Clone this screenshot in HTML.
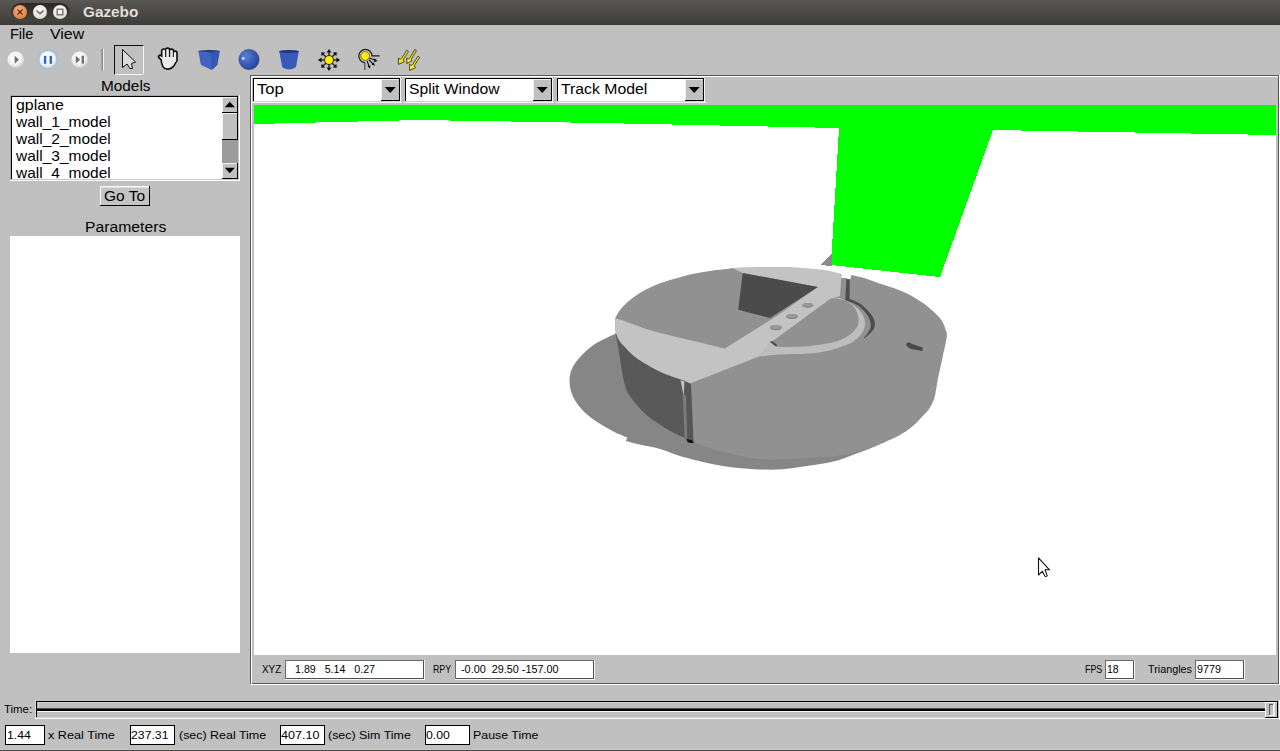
<!DOCTYPE html>
<html><head><meta charset="utf-8"><title>Gazebo</title>
<style>
html,body{margin:0;padding:0;}
body{width:1280px;height:751px;overflow:hidden;position:relative;background:#c0c0c0;font-family:"Liberation Sans",sans-serif;}
.t{position:absolute;white-space:pre;line-height:1;transform-origin:0 0;}
.b{position:absolute;box-sizing:border-box;}
svg{position:absolute;}
</style></head><body>

<div class="b" style="left:0px;top:0px;width:1280px;height:25px;background:linear-gradient(#595854,#3c3b37);"></div>
<svg style="left:0;top:0" width="80" height="25" viewBox="0 0 80 25">
<defs>
<radialGradient id="gc" cx="0.45" cy="0.35" r="0.7"><stop offset="0" stop-color="#f5b382"/><stop offset="1" stop-color="#e0793c"/></radialGradient>
<radialGradient id="gw" cx="0.45" cy="0.35" r="0.7"><stop offset="0" stop-color="#ffffff"/><stop offset="1" stop-color="#dcd9cf"/></radialGradient>
<linearGradient id="gp" x1="0" y1="0" x2="0" y2="1"><stop offset="0" stop-color="#2a2926"/><stop offset="1" stop-color="#46443f"/></linearGradient>
</defs>
<rect x="11" y="3" width="59" height="18" rx="9" fill="url(#gp)"/>
<circle cx="20" cy="12" r="7" fill="url(#gc)"/>
<path d="M17.5 9.5 L22.5 14.5 M22.5 9.5 L17.5 14.5" stroke="#5a2a12" stroke-width="1.3"/>
<circle cx="40" cy="12" r="7" fill="url(#gw)"/>
<path d="M36.6 10.6 L40 13.8 L43.4 10.6" stroke="#6a6862" stroke-width="1.5" fill="none"/>
<circle cx="60" cy="12" r="7" fill="url(#gw)"/>
<rect x="57.2" y="9.2" width="5.6" height="5.6" stroke="#6a6862" stroke-width="1.3" fill="none"/>
</svg>
<div class="t" style="left:82.50px;top:5px;font-size:14px;color:#e2ded6;font-weight:bold;transform:scaleX(1.0942);">Gazebo</div>
<div class="t" style="left:10.00px;top:27px;font-size:14px;color:#000;transform:scaleX(1.0337);">File</div>
<div class="t" style="left:50.00px;top:27px;font-size:14px;color:#000;transform:scaleX(1.1362);">View</div>
<svg style="left:0;top:40px" width="440" height="36" viewBox="0 40 440 36">
<defs>
<radialGradient id="btn" cx="0.45" cy="0.4" r="0.6"><stop offset="0" stop-color="#ffffff"/><stop offset="0.7" stop-color="#f2f2f2"/><stop offset="1" stop-color="#cfcfcf"/></radialGradient>
<radialGradient id="blu" cx="0.35" cy="0.35" r="0.75"><stop offset="0" stop-color="#5b7fd6"/><stop offset="0.6" stop-color="#3658b4"/><stop offset="1" stop-color="#223f96"/></radialGradient>
</defs>
<circle cx="15.7" cy="59.7" r="8.6" fill="#d6d6d6" opacity="0.6"/>
<circle cx="15.7" cy="59.6" r="8" fill="url(#btn)"/>
<path d="M14.6 55.6 L18.9 59.7 L14.6 63.8 Z" fill="#707070"/>
<circle cx="48" cy="59.7" r="10.4" fill="#9fc0e6"/>
<circle cx="48" cy="59.7" r="8.6" fill="url(#btn)"/>
<rect x="43.9" y="55.9" width="2.4" height="7.9" fill="#2f66cc"/>
<rect x="49.6" y="55.9" width="2.4" height="7.9" fill="#2f66cc"/>
<circle cx="79.6" cy="59.7" r="8.6" fill="#d6d6d6" opacity="0.6"/>
<circle cx="79.6" cy="59.6" r="8" fill="url(#btn)"/>
<path d="M75.8 55.8 L80.2 59.7 L75.8 63.6 Z" fill="#707070"/>
<rect x="81.6" y="55.8" width="2.4" height="7.8" fill="#707070"/>
<rect x="101.5" y="49" width="1.5" height="21.5" fill="#8a8a8a"/>
<rect x="103" y="49" width="1" height="21.5" fill="#f0f0f0"/>
<rect x="114.5" y="45.5" width="29" height="29" fill="none" stroke="#111" stroke-width="1"/>
<path d="M143.5 45.5 V74.5 H114.5" fill="none" stroke="#f4f4f4" stroke-width="1"/>
<path d="M122.5 49.5 L122.5 67.5 L127 64 L130 68.5 L132.5 68.5 L131.5 63.5 L135.5 62 Z" fill="#dcdcdc" stroke="#111" stroke-width="1" stroke-linejoin="round"/>
<g stroke="#111" stroke-width="2.3" fill="#111" stroke-linejoin="round" stroke-linecap="round">
<rect x="162" y="49.3" width="3.6" height="12" rx="1.8"/>
<rect x="165.8" y="48.4" width="3.6" height="12" rx="1.8"/>
<rect x="169.7" y="49.4" width="3.6" height="12" rx="1.8"/>
<rect x="173.3" y="51.4" width="3.4" height="10" rx="1.7"/>
<path d="M163.5 61.5 L159.2 57.6 C158 56.5 159.8 54.8 161.2 55.8 L164 58"/>
<path d="M161.5 58 C161.5 63 162.5 68.8 167.5 68.8 C172 68.8 176.2 64 176.2 58 L176 56 L162 56 Z"/>
</g>
<g fill="#ececec">
<rect x="162.5" y="49.8" width="2.6" height="12" rx="1.3"/>
<rect x="166.3" y="48.9" width="2.6" height="12" rx="1.3"/>
<rect x="170.2" y="49.9" width="2.6" height="12" rx="1.3"/>
<rect x="173.8" y="51.9" width="2.4" height="10" rx="1.2"/>
<path d="M163.5 61 L159.6 57.3 C158.9 56.7 160.1 55.8 160.9 56.4 L164.5 59.5 Z"/>
<path d="M162 58.5 C162 63 163 68.3 167.5 68.3 C171.7 68.3 175.7 63.8 175.7 58.5 L175.7 57 L162.5 57 Z"/>
</g>
<path d="M198.8 51 L209 50.2 L219.4 51 L217 65 L211.8 69.6 L201.3 64.6 Z" fill="#4262c6" stroke="#2a3f8e" stroke-width="0.6"/>
<path d="M210.5 52.5 L219.4 51 L217 65 L211.8 69.6 Z" fill="#3755b4"/>
<path d="M198.8 51 L209 50.2 L219.4 51 L210.5 52.5 Z" fill="#22378a"/>


<circle cx="249" cy="59.5" r="10.2" fill="url(#blu)" stroke="#3a3f5a" stroke-width="0.4"/>
<circle cx="243.2" cy="58.4" r="1.3" fill="#d8ecff"/>
<path d="M279.2 51.2 C282 49.8 296 49.8 298.8 51.2 L296 67 C292 70.2 285.5 70.2 282.2 67 Z" fill="#3a58b8"/>
<ellipse cx="289" cy="51.5" rx="9.8" ry="1.5" fill="#1f3283"/>
<g stroke="#333" stroke-width="1.6">
<path d="M329 50.5 V69.5 M319.5 60 H338.5 M322.3 53.3 L335.7 66.7 M335.7 53.3 L322.3 66.7"/>
</g>
<g fill="#111">
<path d="M329 49 L326.6 52.6 H331.4 Z M329 71 L326.6 67.4 H331.4 Z M318 60 L321.6 57.6 V62.4 Z M340 60 L336.4 57.6 V62.4 Z"/>
<path d="M321.2 52.2 L325.2 52.6 L321.6 56.2 Z M336.8 67.8 L332.8 67.4 L336.4 63.8 Z M336.8 52.2 L336.4 56.2 L332.8 52.6 Z M321.2 67.8 L321.6 63.8 L325.2 67.4 Z"/>
</g>
<circle cx="329" cy="60" r="4.5" fill="#ffee00" stroke="#1a1a1a" stroke-width="0.9"/>
<path d="M364.8 62.5 V70" stroke="#555" stroke-width="1.3"/>
<path d="M364.8 62.6 A6.6 6.6 0 1 1 372 55.8 H379.6" fill="none" stroke="#1a1a1a" stroke-width="1.2"/>
<g stroke="#111" stroke-width="1.1"><path d="M369.2 58 L375.5 60.2 M368.8 59.6 L373.2 64 M367.2 60.8 L369 66.5"/></g>
<g fill="#111"><path d="M377.6 60.9 L374.2 58.2 L374 62.2 Z M375 65.8 L371.5 64.6 L373.8 62.4 Z M369.8 68.8 L367.5 66.2 L370.6 65.6 Z"/></g>
<circle cx="365.2" cy="56" r="4.4" fill="#ffee00" stroke="#333" stroke-width="0.6"/>
<g fill="#ffee00" stroke="#222" stroke-width="0.8" stroke-linejoin="round">
<path d="M406.8 50.2 L408.4 51.4 L403.2 59.8 L404.2 61.8 L398.4 64.4 L398.4 58.4 L400.4 59.2 L401.4 58.6 Z"/>
<path d="M414.8 49.4 L416.4 50.6 L411.2 59.4 L412 60.8 L406.8 63.6 L406.8 58 L408.6 58.8 L409.6 58.2 Z"/>
<path d="M418 56.2 L419.6 57.4 L414.2 65.8 L415.6 67.6 L409.6 70.4 L409.6 64.4 L411.6 65.2 L412.6 64.6 Z"/>
</g>
</svg>
<div class="t" style="left:100.60px;top:79px;font-size:14px;color:#000;transform:scaleX(1.0963);">Models</div>
<div class="b" style="left:10px;top:95px;width:230px;height:1px;background:#a8a8a8;"></div>
<div class="b" style="left:10px;top:95px;width:1px;height:86px;background:#a8a8a8;"></div>
<div class="b" style="left:11px;top:96px;width:227px;height:1px;background:#000;"></div>
<div class="b" style="left:11px;top:96px;width:1px;height:84px;background:#000;"></div>
<div class="b" style="left:12px;top:97px;width:210px;height:82px;background:#fff;"></div>
<div class="b" style="left:11px;top:179px;width:228px;height:1px;background:#c8c8c8;"></div>
<div class="b" style="left:10px;top:180px;width:230px;height:1px;background:#fff;"></div>
<div class="b" style="left:238px;top:96px;width:1px;height:84px;background:#c8c8c8;"></div>
<div class="b" style="left:239px;top:95px;width:1px;height:86px;background:#fff;"></div>
<div class="b" style="left:12px;top:97px;width:210px;height:82px;overflow:hidden;">
<div class="t" style="left:3.50px;top:0px;font-size:15.0px;transform:scaleX(1.0605);">gplane</div>
<div class="t" style="left:3.58px;top:17px;font-size:15.0px;transform:scaleX(1.0327);">wall_1_model</div>
<div class="t" style="left:3.58px;top:34px;font-size:15.0px;transform:scaleX(1.0327);">wall_2_model</div>
<div class="t" style="left:3.58px;top:51px;font-size:15.0px;transform:scaleX(1.0327);">wall_3_model</div>
<div class="t" style="left:3.58px;top:68px;font-size:15.0px;transform:scaleX(1.0327);">wall_4_model</div>
</div>
<div class="b" style="left:222px;top:97px;width:16px;height:82px;background:#9c9c9c;"></div>
<div class="b" style="left:222px;top:97px;width:15px;height:16px;background:#c0c0c0;"></div>
<div class="b" style="left:222px;top:97px;width:15px;height:1px;background:#f2f2f2;"></div>
<div class="b" style="left:222px;top:97px;width:1px;height:16px;background:#f2f2f2;"></div>
<div class="b" style="left:222px;top:112px;width:16px;height:1px;background:#000;"></div>
<div class="b" style="left:237px;top:97px;width:1px;height:16px;background:#000;"></div>
<div class="b" style="left:222px;top:113px;width:15px;height:27px;background:#c0c0c0;"></div>
<div class="b" style="left:222px;top:113px;width:15px;height:1px;background:#f2f2f2;"></div>
<div class="b" style="left:222px;top:113px;width:1px;height:27px;background:#f2f2f2;"></div>
<div class="b" style="left:222px;top:139px;width:16px;height:1px;background:#000;"></div>
<div class="b" style="left:237px;top:113px;width:1px;height:27px;background:#000;"></div>
<div class="b" style="left:222px;top:163px;width:15px;height:16px;background:#c0c0c0;"></div>
<div class="b" style="left:222px;top:163px;width:15px;height:1px;background:#f2f2f2;"></div>
<div class="b" style="left:222px;top:163px;width:1px;height:16px;background:#f2f2f2;"></div>
<div class="b" style="left:222px;top:178px;width:16px;height:1px;background:#000;"></div>
<div class="b" style="left:237px;top:163px;width:1px;height:16px;background:#000;"></div>
<svg style="left:222px;top:97px" width="16" height="82" viewBox="222 97 16 82"><path d="M224.8 107.2 L229.8 101.8 L234.8 107.2 Z" fill="#000"/><path d="M224.8 167.8 L229.8 173.2 L234.8 167.8 Z" fill="#000"/></svg>
<div class="b" style="left:100px;top:186px;width:50px;height:20px;background:#c4c4c4;"></div>
<div class="b" style="left:100px;top:186px;width:50px;height:1px;background:#fafafa;"></div>
<div class="b" style="left:100px;top:186px;width:1px;height:20px;background:#fafafa;"></div>
<div class="b" style="left:101px;top:187px;width:48px;height:1px;background:#dcdcdc;"></div>
<div class="b" style="left:100px;top:205px;width:50px;height:1px;background:#000;"></div>
<div class="b" style="left:149px;top:186px;width:1px;height:20px;background:#000;"></div>
<div class="t" style="left:104.30px;top:189px;font-size:14px;color:#000;transform:scaleX(1.1051);">Go To</div>
<div class="t" style="left:84.60px;top:220px;font-size:14px;color:#000;transform:scaleX(1.1232);">Parameters</div>
<div class="b" style="left:10px;top:236px;width:230px;height:417px;background:#fff;"></div>
<div class="b" style="left:250px;top:75px;width:1029px;height:1px;background:#555555;"></div>
<div class="b" style="left:250px;top:75px;width:1px;height:610px;background:#555555;"></div>
<div class="b" style="left:251px;top:76px;width:1027px;height:1px;background:#ffffff;"></div>
<div class="b" style="left:251px;top:76px;width:1px;height:608px;background:#ffffff;"></div>
<div class="b" style="left:252px;top:683px;width:1027px;height:1px;background:#555555;"></div>
<div class="b" style="left:1278px;top:76px;width:1px;height:608px;background:#555555;"></div>
<div class="b" style="left:250px;top:684px;width:1030px;height:1px;background:#ffffff;"></div>
<div class="b" style="left:1279px;top:75px;width:1px;height:610px;background:#ffffff;"></div>
<div class="b" style="left:252px;top:77px;width:148px;height:1px;background:#d8d8d8;"></div>
<div class="b" style="left:253px;top:78px;width:147px;height:23px;background:#fff;"></div>
<div class="b" style="left:253px;top:78px;width:147px;height:1px;background:#000;"></div>
<div class="b" style="left:253px;top:78px;width:1px;height:23px;background:#000;"></div>
<div class="b" style="left:253px;top:101px;width:148px;height:1px;background:#d0d0d0;"></div>
<div class="b" style="left:252px;top:102px;width:150px;height:1px;background:#f4f4f4;"></div>
<div class="b" style="left:400px;top:78px;width:1px;height:24px;background:#f4f4f4;"></div>
<div class="b" style="left:381px;top:79px;width:19px;height:22px;background:#c0c0c0;"></div>
<div class="b" style="left:381px;top:79px;width:18px;height:1px;background:#f0f0f0;"></div>
<div class="b" style="left:381px;top:79px;width:1px;height:21px;background:#f0f0f0;"></div>
<div class="b" style="left:381px;top:100px;width:19px;height:1px;background:#000;"></div>
<div class="b" style="left:399px;top:79px;width:1px;height:22px;background:#000;"></div>
<svg style="left:381px;top:79px" width="19" height="22" viewBox="0 0 19 22"><path d="M3.7 8 L9.2 14 L14.7 8 Z" fill="#000"/></svg>
<div class="t" style="left:257.00px;top:82px;font-size:14px;color:#000;transform:scaleX(1.1890);">Top</div>
<div class="b" style="left:404px;top:77px;width:148px;height:1px;background:#d8d8d8;"></div>
<div class="b" style="left:405px;top:78px;width:147px;height:23px;background:#fff;"></div>
<div class="b" style="left:405px;top:78px;width:147px;height:1px;background:#000;"></div>
<div class="b" style="left:405px;top:78px;width:1px;height:23px;background:#000;"></div>
<div class="b" style="left:405px;top:101px;width:148px;height:1px;background:#d0d0d0;"></div>
<div class="b" style="left:404px;top:102px;width:150px;height:1px;background:#f4f4f4;"></div>
<div class="b" style="left:552px;top:78px;width:1px;height:24px;background:#f4f4f4;"></div>
<div class="b" style="left:533px;top:79px;width:19px;height:22px;background:#c0c0c0;"></div>
<div class="b" style="left:533px;top:79px;width:18px;height:1px;background:#f0f0f0;"></div>
<div class="b" style="left:533px;top:79px;width:1px;height:21px;background:#f0f0f0;"></div>
<div class="b" style="left:533px;top:100px;width:19px;height:1px;background:#000;"></div>
<div class="b" style="left:551px;top:79px;width:1px;height:22px;background:#000;"></div>
<svg style="left:533px;top:79px" width="19" height="22" viewBox="0 0 19 22"><path d="M3.7 8 L9.2 14 L14.7 8 Z" fill="#000"/></svg>
<div class="t" style="left:409.40px;top:82px;font-size:14px;color:#000;transform:scaleX(1.1187);">Split Window</div>
<div class="b" style="left:556px;top:77px;width:148px;height:1px;background:#d8d8d8;"></div>
<div class="b" style="left:557px;top:78px;width:147px;height:23px;background:#fff;"></div>
<div class="b" style="left:557px;top:78px;width:147px;height:1px;background:#000;"></div>
<div class="b" style="left:557px;top:78px;width:1px;height:23px;background:#000;"></div>
<div class="b" style="left:557px;top:101px;width:148px;height:1px;background:#d0d0d0;"></div>
<div class="b" style="left:556px;top:102px;width:150px;height:1px;background:#f4f4f4;"></div>
<div class="b" style="left:704px;top:78px;width:1px;height:24px;background:#f4f4f4;"></div>
<div class="b" style="left:685px;top:79px;width:19px;height:22px;background:#c0c0c0;"></div>
<div class="b" style="left:685px;top:79px;width:18px;height:1px;background:#f0f0f0;"></div>
<div class="b" style="left:685px;top:79px;width:1px;height:21px;background:#f0f0f0;"></div>
<div class="b" style="left:685px;top:100px;width:19px;height:1px;background:#000;"></div>
<div class="b" style="left:703px;top:79px;width:1px;height:22px;background:#000;"></div>
<svg style="left:685px;top:79px" width="19" height="22" viewBox="0 0 19 22"><path d="M3.7 8 L9.2 14 L14.7 8 Z" fill="#000"/></svg>
<div class="t" style="left:561.00px;top:82px;font-size:14px;color:#000;transform:scaleX(1.1280);">Track Model</div>
<div class="b" style="left:252px;top:103px;width:1024px;height:2px;background:#c4bfc4;"></div>
<svg style="left:254px;top:105px" width="1022" height="550" viewBox="254 105 1022 550" shape-rendering="crispEdges">
<rect x="254" y="105" width="1022" height="550" fill="#ffffff"/>
<path d="M254 105 H1276 V135 L993 130 L940 277 L831 265 L839 128 L600 123 L420 120 L254 124 Z" fill="#00ff00"/>
<path d="M820 265 L832 254 L832 266 Z" fill="#8a8a8a"/>
</svg>
<svg style="left:254px;top:105px" width="1022" height="550" viewBox="254 105 1022 550"><path d="M615.4 333.8 C611.93 335.53 600.37 340.45 594.60 344.20 C588.83 347.95 584.55 352.27 580.80 356.30 C577.05 360.33 573.98 364.35 572.10 368.40 C570.22 372.45 569.50 376.27 569.50 380.60 C569.50 384.93 570.22 389.80 572.10 394.40 C573.98 399.00 577.05 403.88 580.80 408.20 C584.55 412.52 589.42 416.55 594.60 420.30 C599.78 424.05 606.42 427.82 611.90 430.70 C617.38 433.58 624.90 436.45 627.50 437.60 L625.7 441.1 C628.02 441.68 633.88 443.28 639.60 444.60 C645.32 445.92 653.27 447.10 660.00 449.00 C666.73 450.90 672.08 453.67 680.00 456.00 C687.92 458.33 699.17 461.17 707.50 463.00 C715.83 464.83 722.18 465.97 730.00 467.00 C737.82 468.03 745.65 468.83 754.40 469.20 C763.15 469.57 771.57 470.07 782.50 469.20 C793.43 468.33 810.42 465.58 820.00 464.00 C829.58 462.42 833.67 461.52 840.00 459.70 C846.33 457.88 853.00 454.97 858.00 453.10 C863.00 451.23 865.40 450.38 870.00 448.50 C874.60 446.62 883.00 442.92 885.60 441.80 L880 400 L700 330 Z" fill="#868686"/><path d="M615.1 318.4 C615.95 316.97 618.00 312.60 620.20 309.80 C622.40 307.00 624.92 304.48 628.30 301.60 C631.68 298.72 635.93 295.28 640.50 292.50 C645.07 289.72 650.62 287.02 655.70 284.90 C660.78 282.78 665.07 281.58 671.00 279.80 C676.93 278.02 684.53 275.72 691.30 274.20 C698.07 272.68 705.68 271.55 711.60 270.70 C717.52 269.85 723.40 269.53 726.80 269.10 C730.20 268.67 731.13 268.27 732.00 268.10 L841.5 274 L841.3 278 L847 278 L847.2 279.3 L850.4 279.2 L851.2 275 C853.50 275.50 859.90 276.80 864.00 278.00 C868.10 279.20 871.60 280.70 876.00 282.20 C880.40 283.70 885.40 285.20 890.40 287.00 C895.40 288.80 900.82 290.50 906.00 293.00 C911.18 295.50 916.92 298.90 921.50 302.00 C926.08 305.10 930.08 308.43 933.50 311.60 C936.92 314.77 940.00 318.02 942.00 321.00 C944.00 323.98 944.72 326.83 945.50 329.50 C946.28 332.17 947.28 331.92 946.70 337.00 C946.12 342.08 943.50 352.83 942.00 360.00 C940.50 367.17 938.92 373.87 937.70 380.00 C936.48 386.13 935.98 392.20 934.70 396.80 C933.42 401.40 931.78 404.60 930.00 407.60 C928.22 410.60 927.00 411.60 924.00 414.80 C921.00 418.00 916.00 423.43 912.00 426.80 C908.00 430.17 904.40 432.50 900.00 435.00 C895.60 437.50 888.00 440.67 885.60 441.80 C883.00 442.83 877.60 445.72 870.00 448.00 C862.40 450.28 851.50 453.73 840.00 455.50 C828.50 457.27 813.67 457.95 801.00 458.60 C788.33 459.25 776.50 460.37 764.00 459.40 C751.50 458.43 737.77 455.62 726.00 452.80 C714.23 449.98 698.83 444.22 693.40 442.50 L687 440 L683 380 L615.4 331 Z" fill="#919191"/><path d="M615.6 334 C616.07 336.33 617.47 342.57 618.40 348.00 C619.33 353.43 620.30 361.17 621.20 366.60 C622.10 372.03 622.83 376.48 623.80 380.60 C624.77 384.72 625.22 387.73 627.00 391.30 C628.78 394.87 631.48 398.27 634.50 402.00 C637.52 405.73 641.20 410.17 645.10 413.70 C649.00 417.23 653.45 420.18 657.90 423.20 C662.35 426.22 667.00 429.22 671.80 431.80 C676.60 434.38 684.22 437.55 686.70 438.70 L683 380 C680.52 379.33 674.13 377.30 670.60 376.00 C667.07 374.70 664.42 373.62 661.30 372.20 C658.18 370.78 655.02 369.20 651.90 367.50 C648.78 365.80 645.70 364.02 642.60 362.00 C639.50 359.98 636.40 358.07 633.30 355.40 C630.20 352.73 626.33 348.48 624.00 346.00 C621.67 343.52 620.70 342.83 619.30 340.50 C617.90 338.17 616.22 333.42 615.60 332.00 Z" fill="#595959"/><path d="M683 380 L691 383.5 L693.6 443 L686.7 439 Z" fill="#565656"/><path d="M682.8 395 L686 395.5 L687.2 439 L684.8 438.8 Z" fill="#7c7c7c"/><path d="M680.5 380 L684.5 381.5 L683.6 396 Z" fill="#c3c3c3"/><path d="M686 438.7 L692.5 440.5 L693.6 443.2 L688 442.5 Z" fill="#111"/><path d="M615.1 318.4 C616.42 318.75 617.63 318.68 623.00 320.50 C628.37 322.32 638.60 326.58 647.30 329.30 C656.00 332.02 666.42 334.62 675.20 336.80 C683.98 338.98 691.73 340.45 700.00 342.40 C708.27 344.35 720.67 347.48 724.80 348.50 L779.8 314 L817.8 287 L742.7 272.9 L732 268.1 L745 267.3 L760 267 L790 267 L804 267.9 L815 268.9 L828 270.5 L834 272 L841.5 274 L840 296 L830.4 298.7 L771.7 341.8 L759 356.6 L690 383.5 L683 380 C680.52 379.33 674.13 377.30 670.60 376.00 C667.07 374.70 664.42 373.62 661.30 372.20 C658.18 370.78 655.02 369.20 651.90 367.50 C648.78 365.80 645.70 364.02 642.60 362.00 C639.50 359.98 636.40 358.07 633.30 355.40 C630.20 352.73 626.33 348.48 624.00 346.00 C621.67 343.52 620.70 342.83 619.30 340.50 C617.90 338.17 616.22 333.42 615.60 332.00 Z" fill="#c3c3c3"/><path d="M742.7 272.9 L817.8 287 L770 318 L738.2 309.8 Z" fill="#4b4b4b"/><path d="M830.4 298.7 L838.9 297.5 C841.20 298.67 848.80 301.73 852.70 304.50 C856.60 307.27 860.25 310.72 862.30 314.10 C864.35 317.48 865.35 321.25 865.00 324.80 C864.65 328.35 862.95 332.20 860.20 335.40 C857.45 338.60 853.65 341.50 848.50 344.00 C843.35 346.50 836.05 348.80 829.30 350.40 C822.55 352.00 816.00 352.90 808.00 353.60 C800.00 354.30 789.47 354.10 781.30 354.60 C773.13 355.10 762.72 356.27 759.00 356.60 L771.7 341.8 C772.58 342.60 771.85 345.80 777.00 346.60 C782.15 347.40 794.77 347.03 802.60 346.60 C810.43 346.17 817.60 345.15 824.00 344.00 C830.40 342.85 836.03 341.83 841.00 339.70 C845.97 337.57 850.87 334.05 853.80 331.20 C856.73 328.35 858.23 326.15 858.60 322.60 C858.97 319.05 857.77 313.33 856.00 309.90 C854.23 306.47 851.00 303.87 848.00 302.00 C845.00 300.13 840.93 299.25 838.00 298.70 C835.07 298.15 831.67 298.70 830.40 298.70 Z" fill="#bdbdbd"/><path d="M846.4 279.2 L849.8 279.2 L849.6 298.7 C851.55 299.67 857.75 301.93 861.30 304.50 C864.85 307.07 868.65 311.08 870.90 314.10 C873.15 317.12 874.42 319.93 874.80 322.60 C875.18 325.27 874.92 327.43 873.20 330.10 C871.48 332.77 865.95 337.18 864.50 338.60 L864 338.1 C864.93 336.77 868.50 332.50 869.60 330.10 C870.70 327.70 870.97 326.18 870.60 323.70 C870.23 321.22 869.50 318.22 867.40 315.20 C865.30 312.18 861.68 308.15 858.00 305.60 C854.32 303.05 847.42 300.85 845.30 299.90 Z" fill="#4e4e4e"/><ellipse cx="775.9" cy="327.6" rx="5.9" ry="2.6" fill="#7e7e7e"/><ellipse cx="775.9" cy="327.1" rx="5.6" ry="2.1" fill="#999999"/><ellipse cx="792.1" cy="316.4" rx="5.8" ry="2.5" fill="#7e7e7e"/><ellipse cx="792.1" cy="315.9" rx="5.5" ry="2" fill="#999999"/><ellipse cx="807.8" cy="305.3" rx="5.5" ry="2.4" fill="#7e7e7e"/><ellipse cx="807.8" cy="304.8" rx="5.2" ry="1.9" fill="#999999"/><path d="M769.6 341.5 L772.5 341.3 L777 345 L776.5 346.8 Z" fill="#444"/><path d="M906 344.5 C907 342 909.5 342 912 344 L922.7 347.5 L922.7 351 L914 349.5 C910 349 907 347.5 906 344.5 Z" fill="#4a4a4a"/></svg>
<svg style="left:1036px;top:556px" width="16" height="24" viewBox="0 0 16 24">
<path d="M2.5 1.8 V19 L6.3 15.3 L8.8 20 C9.3 20.8 10.8 20.5 11.2 19.6 L9 13.8 H13.5 Z" fill="#fff" stroke="#111" stroke-width="1.1" stroke-linejoin="round"/>
</svg>
<div class="t" style="left:262.40px;top:664px;font-size:11px;color:#000;transform:scaleX(0.8974);">XYZ</div>
<div class="b" style="left:285px;top:660px;width:140px;height:20px;background:#fff;"></div>
<div class="b" style="left:285px;top:660px;width:140px;height:1px;background:#6a6a6a;"></div>
<div class="b" style="left:285px;top:660px;width:1px;height:20px;background:#6a6a6a;"></div>
<div class="b" style="left:286px;top:678px;width:138px;height:1px;background:#505050;"></div>
<div class="b" style="left:423px;top:661px;width:1px;height:18px;background:#505050;"></div>
<div class="b" style="left:285px;top:679px;width:140px;height:1px;background:#f4f4f4;"></div>
<div class="b" style="left:424px;top:660px;width:1px;height:20px;background:#f4f4f4;"></div>
<div class="t" style="left:294.75px;top:664px;font-size:11px;color:#000;transform:scaleX(0.9691);">1.89   5.14   0.27</div>
<div class="t" style="left:433.30px;top:664px;font-size:11px;color:#000;transform:scaleX(0.7963);">RPY</div>
<div class="b" style="left:455px;top:660px;width:140px;height:20px;background:#fff;"></div>
<div class="b" style="left:455px;top:660px;width:140px;height:1px;background:#6a6a6a;"></div>
<div class="b" style="left:455px;top:660px;width:1px;height:20px;background:#6a6a6a;"></div>
<div class="b" style="left:456px;top:678px;width:138px;height:1px;background:#505050;"></div>
<div class="b" style="left:593px;top:661px;width:1px;height:18px;background:#505050;"></div>
<div class="b" style="left:455px;top:679px;width:140px;height:1px;background:#f4f4f4;"></div>
<div class="b" style="left:594px;top:660px;width:1px;height:20px;background:#f4f4f4;"></div>
<div class="t" style="left:461.20px;top:664px;font-size:11px;color:#000;transform:scaleX(0.9853);">-0.00  29.50 -157.00</div>
<div class="t" style="left:1084.60px;top:664px;font-size:11px;color:#000;transform:scaleX(0.8086);">FPS</div>
<div class="b" style="left:1105px;top:660px;width:30px;height:20px;background:#fff;"></div>
<div class="b" style="left:1105px;top:660px;width:30px;height:1px;background:#6a6a6a;"></div>
<div class="b" style="left:1105px;top:660px;width:1px;height:20px;background:#6a6a6a;"></div>
<div class="b" style="left:1106px;top:678px;width:28px;height:1px;background:#505050;"></div>
<div class="b" style="left:1133px;top:661px;width:1px;height:18px;background:#505050;"></div>
<div class="b" style="left:1105px;top:679px;width:30px;height:1px;background:#f4f4f4;"></div>
<div class="b" style="left:1134px;top:660px;width:1px;height:20px;background:#f4f4f4;"></div>
<div class="t" style="left:1107.20px;top:664px;font-size:11px;color:#000;transform:scaleX(0.9500);">18</div>
<div class="t" style="left:1147.70px;top:664px;font-size:11px;color:#000;transform:scaleX(0.9794);">Triangles</div>
<div class="b" style="left:1195px;top:660px;width:50px;height:20px;background:#fff;"></div>
<div class="b" style="left:1195px;top:660px;width:50px;height:1px;background:#6a6a6a;"></div>
<div class="b" style="left:1195px;top:660px;width:1px;height:20px;background:#6a6a6a;"></div>
<div class="b" style="left:1196px;top:678px;width:48px;height:1px;background:#505050;"></div>
<div class="b" style="left:1243px;top:661px;width:1px;height:18px;background:#505050;"></div>
<div class="b" style="left:1195px;top:679px;width:50px;height:1px;background:#f4f4f4;"></div>
<div class="b" style="left:1244px;top:660px;width:1px;height:20px;background:#f4f4f4;"></div>
<div class="t" style="left:1196.90px;top:664px;font-size:11px;color:#000;transform:scaleX(0.9765);">9779</div>
<div class="t" style="left:4.00px;top:704px;font-size:11px;color:#000;transform:scaleX(1.0363);">Time:</div>
<div class="b" style="left:35px;top:700px;width:1px;height:20px;background:#d8d8d8;"></div>
<div class="b" style="left:36px;top:701px;width:1241px;height:1px;background:#000;"></div>
<div class="b" style="left:36px;top:701px;width:1px;height:17px;background:#000;"></div>
<div class="b" style="left:37px;top:702px;width:1240px;height:1px;background:#d4d4d4;"></div>
<div class="b" style="left:37px;top:708px;width:1228px;height:1px;background:#505050;"></div>
<div class="b" style="left:37px;top:709px;width:1228px;height:2px;background:#000;"></div>
<div class="b" style="left:37px;top:711px;width:1228px;height:1px;background:#f8f8f8;"></div>
<div class="b" style="left:36px;top:717px;width:1241px;height:1px;background:#d0d0d0;"></div>
<div class="b" style="left:35px;top:718px;width:1245px;height:1px;background:#f8f8f8;"></div>
<div class="b" style="left:1277px;top:701px;width:1px;height:17px;background:#000;"></div>
<div class="b" style="left:1279px;top:700px;width:1px;height:20px;background:#f4f4f4;"></div>
<div class="b" style="left:1265px;top:702px;width:12px;height:15px;background:#c0c0c0;"></div>
<div class="b" style="left:1265px;top:702px;width:12px;height:1px;background:#fafafa;"></div>
<div class="b" style="left:1265px;top:702px;width:1px;height:15px;background:#fafafa;"></div>
<div class="b" style="left:1265px;top:717px;width:13px;height:1px;background:#000;"></div>
<div class="b" style="left:1274px;top:703px;width:1px;height:14px;background:#e8e8e8;"></div>
<div class="b" style="left:1269px;top:704px;width:4px;height:1px;background:#555;"></div>
<div class="b" style="left:1269px;top:704px;width:1px;height:11px;background:#555;"></div>
<div class="b" style="left:1269px;top:715px;width:5px;height:1px;background:#fafafa;"></div>
<div class="b" style="left:1273px;top:704px;width:1px;height:12px;background:#fafafa;"></div>
<div class="b" style="left:5px;top:725px;width:40px;height:20px;background:#fff;"></div>
<div class="b" style="left:5px;top:725px;width:40px;height:1px;background:#000;"></div>
<div class="b" style="left:5px;top:744px;width:40px;height:1px;background:#000;"></div>
<div class="b" style="left:5px;top:725px;width:1px;height:20px;background:#000;"></div>
<div class="b" style="left:44px;top:725px;width:1px;height:20px;background:#000;"></div>
<div class="t" style="left:6.60px;top:730px;font-size:11.5px;color:#000;transform:scaleX(1.0685);">1.44</div>
<div class="t" style="left:48.30px;top:730px;font-size:11.5px;color:#000;transform:scaleX(1.1001);">x Real Time</div>
<div class="b" style="left:130px;top:725px;width:45px;height:20px;background:#fff;"></div>
<div class="b" style="left:130px;top:725px;width:45px;height:1px;background:#000;"></div>
<div class="b" style="left:130px;top:744px;width:45px;height:1px;background:#000;"></div>
<div class="b" style="left:130px;top:725px;width:1px;height:20px;background:#000;"></div>
<div class="b" style="left:174px;top:725px;width:1px;height:20px;background:#000;"></div>
<div class="t" style="left:131.25px;top:730px;font-size:11.5px;color:#000;transform:scaleX(1.0656);">237.31</div>
<div class="t" style="left:178.50px;top:730px;font-size:11.5px;color:#000;transform:scaleX(1.0820);">(sec) Real Time</div>
<div class="b" style="left:280px;top:725px;width:45px;height:20px;background:#fff;"></div>
<div class="b" style="left:280px;top:725px;width:45px;height:1px;background:#000;"></div>
<div class="b" style="left:280px;top:744px;width:45px;height:1px;background:#000;"></div>
<div class="b" style="left:280px;top:725px;width:1px;height:20px;background:#000;"></div>
<div class="b" style="left:324px;top:725px;width:1px;height:20px;background:#000;"></div>
<div class="t" style="left:281.30px;top:730px;font-size:11.5px;color:#000;transform:scaleX(1.0912);">407.10</div>
<div class="t" style="left:328.20px;top:730px;font-size:11.5px;color:#000;transform:scaleX(1.0803);">(sec) Sim Time</div>
<div class="b" style="left:425px;top:725px;width:45px;height:20px;background:#fff;"></div>
<div class="b" style="left:425px;top:725px;width:45px;height:1px;background:#000;"></div>
<div class="b" style="left:425px;top:744px;width:45px;height:1px;background:#000;"></div>
<div class="b" style="left:425px;top:725px;width:1px;height:20px;background:#000;"></div>
<div class="b" style="left:469px;top:725px;width:1px;height:20px;background:#000;"></div>
<div class="t" style="left:426.30px;top:730px;font-size:11.5px;color:#000;transform:scaleX(1.0640);">0.00</div>
<div class="t" style="left:473.30px;top:730px;font-size:11.5px;color:#000;transform:scaleX(1.0771);">Pause Time</div>
<div class="b" style="left:0px;top:749px;width:1280px;height:1px;background:#c8c8c8;"></div>
<div class="b" style="left:0px;top:750px;width:1280px;height:1px;background:#4a4844;"></div>
</body></html>
